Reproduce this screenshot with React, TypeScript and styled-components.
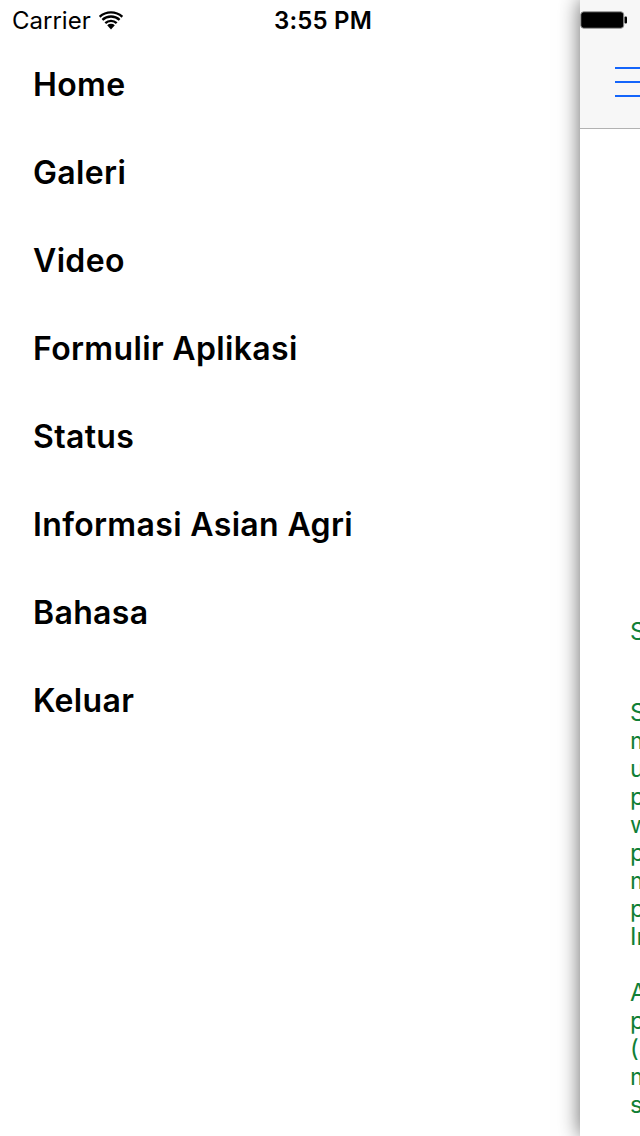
import React from "react";
import styled, { createGlobalStyle } from "styled-components";

const GlobalStyle = createGlobalStyle`
  html, body { margin: 0; padding: 0; background: #ffffff; }
  body { font-family: Inter, "Noto Sans", sans-serif; -webkit-font-smoothing: antialiased; }
  * { box-sizing: border-box; }
`;

const Screen = styled.div`
  position: relative;
  width: 640px;
  height: 1136px;
  overflow: hidden;
  display: flex;
  background: #ffffff;
`;

const StatusBar = styled.div`
  position: absolute;
  top: 0;
  left: 0;
  right: 0;
  height: 40px;
  z-index: 5;
  display: grid;
  grid-template-columns: 1fr auto 1fr;
  align-items: center;
  padding: 0 12px;
  font-family: Inter, "Noto Sans", sans-serif;
  font-size: 24px;
  color: #000;
`;

const StatusLeft = styled.div`
  display: flex;
  align-items: center;
  gap: 8px;
  font-weight: 400;
`;

const StatusTime = styled.div`
  font-weight: 600;
  letter-spacing: 0.2px;
  transform: translateX(3px);
`;

const StatusRight = styled.div`
  display: flex;
  justify-content: flex-end;
  align-items: center;
`;

const Menu = styled.nav`
  width: 580px;
  flex-shrink: 0;
  padding-top: 40px;
  display: flex;
  flex-direction: column;
`;

const MenuItem = styled.div`
  height: 88px;
  display: flex;
  align-items: center;
  padding-left: 33px;
  font-family: Inter, "Noto Sans", sans-serif;
  font-size: 32px;
  font-weight: 600;
  letter-spacing: 0.35px;
  color: #000;
`;

const Content = styled.main`
  width: 640px;
  flex-shrink: 0;
  background: #ffffff;
  box-shadow: 0 0 20px rgba(0, 0, 0, 0.6);
  display: flex;
  flex-direction: column;
  position: relative;
  z-index: 2;
`;

const NavBar = styled.header`
  height: 129px;
  background: #f7f7f7;
  border-bottom: 1px solid #b2b2b2;
  padding: 40px 0 0 35px;
  display: flex;
  align-items: center;
`;

const Hamburger = styled.div`
  width: 44px;
  display: flex;
  flex-direction: column;
  gap: 12px;
  transform: translateY(-2px);
`;

const HamLine = styled.span`
  display: block;
  height: 2px;
  width: 44px;
  background: #1465fb;
`;

const Banner = styled.div`
  height: 489px;
`;

const Article = styled.div`
  padding-left: 50px;
  color: #117f36;
  font-family: Inter, "Noto Sans", sans-serif;
  font-size: 24px;
  line-height: 28px;
  display: flex;
  flex-direction: column;
`;

const Title = styled.div`
  white-space: nowrap;
  margin-bottom: 53px;
`;

const Paragraph = styled.div<{ $gap?: number }>`
  margin-bottom: ${(p) => p.$gap ?? 0}px;
`;

const Line = styled.div`
  white-space: nowrap;
`;

const WifiIcon = () => (
  <svg width="24" height="20" viewBox="0 0 24 20" aria-hidden="true">
    <path d="M12 19.5 L8.2 15.2 A5.6 5.6 0 0 1 15.8 15.2 Z" fill="#000" />
    <path d="M5.5 12.2 A9.6 9.6 0 0 1 18.5 12.2 L16.9 14 A7.2 7.2 0 0 0 7.1 14 Z" fill="#000" />
    <path d="M2.6 9 A14 14 0 0 1 21.4 9 L19.8 10.8 A11.6 11.6 0 0 0 4.2 10.8 Z" fill="#000" />
    <path d="M-0.2 5.9 A18 18 0 0 1 24.2 5.9 L22.6 7.7 A15.6 15.6 0 0 0 1.4 7.7 Z" fill="#000" />
  </svg>
);

const BatteryIcon = () => (
  <svg width="48" height="18" viewBox="0 0 48 18" aria-hidden="true">
    <rect x="0.75" y="0.75" width="43" height="16.5" rx="3" fill="#000" stroke="#9a9a9a" strokeWidth="1" />
    <rect x="44.5" y="5.5" width="2.5" height="7" rx="1" fill="#000" />
  </svg>
);

const menuItems = [
  "Home",
  "Galeri",
  "Video",
  "Formulir Aplikasi",
  "Status",
  "Informasi Asian Agri",
  "Bahasa",
  "Keluar",
];

const para1 = [
  "Sebagai salah satu perusahaan kelapa sawit",
  "mitra petani terbesar di Indonesia, kami",
  "untuk terus mendukung peningkatan",
  "produktivitas dan kesejahteraan petani",
  "wilayah operasional perusahaan melalui",
  "program kemitraan yang berkelanjutan,",
  "membantu petani meningkatkan hasil",
  "perkebunan sesuai standar nasional",
  "Indonesia.",
];

const para2 = [
  "Asian Agri menjalin kemitraan dengan",
  "petani plasma dan petani swadaya",
  "(smallholders) melalui program",
  "mitra yang mencakup pelatihan,",
  "sertifikasi, dan pendampingan.",
];

export default function App() {
  return (
    <>
      <GlobalStyle />
      <Screen>
        <StatusBar>
          <StatusLeft>
            <span>Carrier</span>
            <WifiIcon />
          </StatusLeft>
          <StatusTime>3:55 PM</StatusTime>
          <StatusRight>
            <BatteryIcon />
          </StatusRight>
        </StatusBar>
        <Menu>
          {menuItems.map((m) => (
            <MenuItem key={m}>{m}</MenuItem>
          ))}
        </Menu>
        <Content>
          <NavBar>
            <Hamburger>
              <HamLine />
              <HamLine />
              <HamLine />
            </Hamburger>
          </NavBar>
          <Banner />
          <Article>
            <Title>Selamat Datang di Asian Agri</Title>
            <Paragraph $gap={28}>
              {para1.map((l) => (
                <Line key={l}>{l}</Line>
              ))}
            </Paragraph>
            <Paragraph>
              {para2.map((l) => (
                <Line key={l}>{l}</Line>
              ))}
            </Paragraph>
          </Article>
        </Content>
      </Screen>
    </>
  );
}
